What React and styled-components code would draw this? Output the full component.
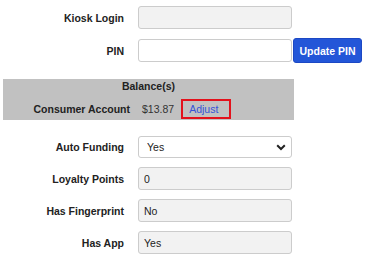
import React from 'react';
import styled, { createGlobalStyle } from 'styled-components';

const GlobalStyle = createGlobalStyle`
  body {
    margin: 0;
    background: #ffffff;
    font-family: "Liberation Sans", Arial, sans-serif;
    color: #222222;
  }
`;

const Page = styled.div`
  width: 367px;
  padding-top: 5px;
`;

const FieldRow = styled.div`
  display: flex;
  align-items: center;
  height: 25px;
  margin-bottom: ${(p) => p.gap || 8}px;
`;

const Label = styled.label`
  width: 124px;
  text-align: right;
  font-size: 10.5px;
  font-weight: bold;
  color: #222222;
  margin-right: 14px;
  flex-shrink: 0;
`;

const TextInput = styled.input`
  box-sizing: border-box;
  width: 154px;
  height: 23px;
  padding: 0 5px;
  border: 1px solid #cccccc;
  border-radius: 3px;
  background: ${(p) => (p.readOnly ? '#f2f2f2' : '#ffffff')};
  font-family: "Liberation Sans", Arial, sans-serif;
  font-size: 10.5px;
  color: #222222;
  outline: none;
`;

const SelectWrap = styled.div`
  position: relative;
  width: 154px;
  height: 22px;

  svg {
    position: absolute;
    right: 6px;
    top: 8px;
    pointer-events: none;
  }
`;

const Select = styled.select`
  box-sizing: border-box;
  appearance: none;
  width: 100%;
  height: 100%;
  padding: 0 8px;
  border: 1px solid #cccccc;
  border-radius: 3px;
  background: #ffffff;
  font-family: "Liberation Sans", Arial, sans-serif;
  font-size: 10.5px;
  color: #222222;
  outline: none;
`;

const PrimaryButton = styled.button`
  box-sizing: border-box;
  height: 25px;
  width: 69px;
  margin-left: 1px;
  padding: 0;
  border: 1px solid #1c48c4;
  border-radius: 3px;
  background: #2356d8;
  color: #ffffff;
  font-family: "Liberation Sans", Arial, sans-serif;
  font-size: 10.5px;
  font-weight: bold;
`;

const BalancePanel = styled.div`
  width: 291px;
  margin: 16px 0 14px 3px;
  padding-bottom: 1px;
  background: #c1c1c1;
  font-size: 10.5px;
`;

const PanelTitle = styled.div`
  height: 15px;
  line-height: 15px;
  text-align: center;
  font-weight: bold;
  color: #222222;
`;

const BalanceRow = styled.div`
  display: flex;
  align-items: center;
  height: 20px;
  margin-top: 5px;
`;

const AccountName = styled.span`
  width: 127px;
  text-align: right;
  margin-right: 12px;
  font-weight: bold;
  color: #222222;
`;

const Amount = styled.span`
  color: #333333;
  margin-right: 7px;
`;

const AdjustLink = styled.a`
  box-sizing: border-box;
  height: 20px;
  width: 50px;
  padding-left: 6px;
  display: flex;
  align-items: center;
  border: 2px solid #e3121c;
  color: #3653d8;
  text-decoration: none;
  cursor: pointer;
`;

const Chevron = () => (
  <svg width="10" height="7" viewBox="0 0 10 7">
    <path d="M1.2 1.3 L5 5 L8.8 1.3" fill="none" stroke="#222" strokeWidth="2" />
  </svg>
);

export default function App() {
  return (
    <Page>
      <GlobalStyle />
      <FieldRow>
        <Label>Kiosk Login</Label>
        <TextInput readOnly value="" />
      </FieldRow>
      <FieldRow gap={0}>
        <Label>PIN</Label>
        <TextInput defaultValue="" />
        <PrimaryButton>Update PIN</PrimaryButton>
      </FieldRow>

      <BalancePanel>
        <PanelTitle>Balance(s)</PanelTitle>
        <BalanceRow>
          <AccountName>Consumer Account</AccountName>
          <Amount>$13.87</Amount>
          <AdjustLink>Adjust</AdjustLink>
        </BalanceRow>
      </BalancePanel>

      <FieldRow gap={7}>
        <Label>Auto Funding</Label>
        <SelectWrap>
          <Select defaultValue="yes">
            <option value="yes">Yes</option>
            <option value="no">No</option>
          </Select>
          <Chevron />
        </SelectWrap>
      </FieldRow>
      <FieldRow gap={7}>
        <Label>Loyalty Points</Label>
        <TextInput readOnly value="0" />
      </FieldRow>
      <FieldRow gap={7}>
        <Label>Has Fingerprint</Label>
        <TextInput readOnly value="No" />
      </FieldRow>
      <FieldRow gap={0}>
        <Label>Has App</Label>
        <TextInput readOnly value="Yes" />
      </FieldRow>
    </Page>
  );
}
